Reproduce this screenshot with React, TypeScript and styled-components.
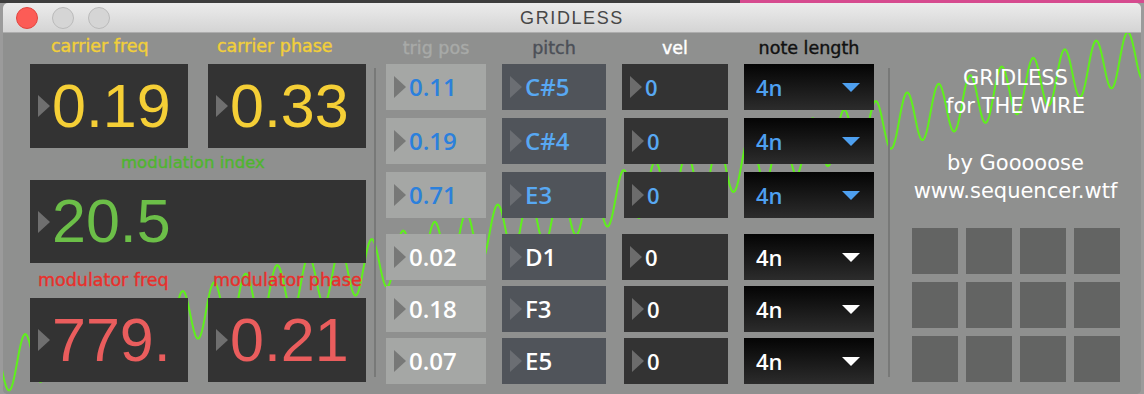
import React from 'react';
import styled, { createGlobalStyle } from 'styled-components';

const Global = createGlobalStyle`
  html, body { margin: 0; padding: 0; }
  body { width: 1144px; height: 394px; overflow: hidden; background: #9b9b9b; font-family: "DejaVu Sans", sans-serif; }
`;

const Page = styled.div`
  width: 1144px;
  height: 394px;
  box-sizing: border-box;
  padding-top: 3px;
  overflow: hidden;
  background: linear-gradient(to right, #3e3e3e 0, #3e3e3e 740px, #d64b8f 740px) top left / 100% 3px no-repeat, #9b9b9b;
`;

const Window = styled.div`
  margin-left: 3px;
  width: 1138px;
  height: 391px;
  border-radius: 5px;
  overflow: hidden;
  display: flex;
  flex-direction: column;
  background: #8f908f;
`;

const TitleBar = styled.div`
  flex: none;
  height: 29px;
  display: grid;
  grid-template-columns: 1fr auto 1fr;
  align-items: center;
  background: linear-gradient(#ececec, #d4d4d4);
  border-bottom: 1px solid #adadad;
  position: relative;
  z-index: 2;
`;

const Lights = styled.div`
  display: flex;
  gap: 14px;
  padding-left: 13px;
  margin-top: 1px;
`;

const Light = styled.span<{ $red?: boolean }>`
  width: 20px;
  height: 20px;
  border-radius: 50%;
  background: ${p => (p.$red ? '#fc5c56' : '#d5d5d5')};
  border: 1px solid ${p => (p.$red ? '#e1453f' : '#bababa')};
`;

const Title = styled.div`
  font: 400 18px/1 "Liberation Sans", Arial, sans-serif;
  letter-spacing: 1.6px;
  color: #474747;
`;

const Body = styled.div`
  position: relative;
  flex: 1;
  display: flex;
  padding-left: 27px;
  background: #8f908f;
`;

const Wave = styled.svg`
  position: absolute;
  left: 0;
  top: 0;
  z-index: 0;
  pointer-events: none;
`;

const LeftPanel = styled.div`
  position: relative;
  z-index: 1;
  flex: none;
  display: grid;
  grid-template-columns: 158px 158px;
  grid-template-rows: 31px 84px 32px 83px 35px 84px;
  column-gap: 20px;
`;

const Label = styled.div<{ $color: string; $indent: number; $size?: number; $span?: boolean }>`
  grid-column: ${p => (p.$span ? '1 / -1' : 'auto')};
  align-self: end;
  padding-bottom: 9px;
  padding-left: ${p => p.$indent}px;
  color: ${p => p.$color};
  font: 400 ${p => p.$size ?? 17.5}px/1 "DejaVu Sans", sans-serif;
  -webkit-text-stroke: 0.4px ${p => p.$color};
  white-space: nowrap;
`;

const Arrow = styled.span<{ $color?: string }>`
  flex: none;
  width: 0;
  height: 0;
  border-top: 11.5px solid transparent;
  border-bottom: 11.5px solid transparent;
  border-left: 12px solid ${p => p.$color ?? '#6f6f6f'};
`;

const BigBox = styled.div<{ $span?: boolean }>`
  grid-column: ${p => (p.$span ? '1 / -1' : 'auto')};
  display: flex;
  align-items: center;
  padding-left: 8px;
  background: #333333;
`;

const BigValue = styled.span<{ $color: string }>`
  margin-left: 2px;
  color: ${p => p.$color};
  font: 400 61px/1 "Liberation Sans", Arial, sans-serif;
`;

const Divider = styled.div<{ $gap: number }>`
  position: relative;
  z-index: 1;
  flex: none;
  width: 2px;
  height: 309px;
  margin-top: 35px;
  margin-left: ${p => p.$gap}px;
  background: #787978;
`;

const SeqPanel = styled.div`
  position: relative;
  z-index: 1;
  flex: none;
  margin-left: 10px;
  display: flex;
  flex-direction: column;
`;

const SeqGrid = styled.div<{ $gap: number; $top?: number }>`
  display: grid;
  grid-template-columns: 100px 104px 106px 130px;
  grid-auto-rows: 46px;
  column-gap: 16px;
  row-gap: ${p => p.$gap}px;
  margin-top: ${p => p.$top ?? 0}px;
`;

const HeaderRow = styled.div`
  display: grid;
  grid-template-columns: 100px 104px 106px 130px;
  column-gap: 16px;
  height: 31px;
`;

const Header = styled.div<{ $color: string }>`
  align-self: end;
  padding-bottom: 7px;
  text-align: center;
  color: ${p => p.$color};
  font: 400 17.5px/1 "DejaVu Sans", sans-serif;
  -webkit-text-stroke: 0.4px ${p => p.$color};
  white-space: nowrap;
`;

const NumBox = styled.div<{ $bg: string; $inset?: boolean }>`
  display: flex;
  align-items: center;
  padding-left: 8px;
  margin-left: ${p => (p.$inset ? 2 : 0)}px;
  background: ${p => p.$bg};
`;

const NumValue = styled.span<{ $color: string; $size?: number }>`
  margin-left: 3px;
  color: ${p => p.$color};
  font: 600 ${p => p.$size ?? 24}px/1 "Open Sans", sans-serif;
`;

const Menu = styled.div`
  display: flex;
  align-items: center;
  justify-content: space-between;
  padding: 0 14px 0 12px;
  background: linear-gradient(#040404, #2c2c2c);
`;

const MenuValue = styled.span<{ $color: string }>`
  color: ${p => p.$color};
  font: 600 22px/1 "Open Sans", sans-serif;
`;

const MenuCaret = styled.span<{ $color: string }>`
  width: 0;
  height: 0;
  border-left: 9px solid transparent;
  border-right: 9px solid transparent;
  border-top: 9px solid ${p => p.$color};
`;

const InfoPanel = styled.div`
  position: relative;
  z-index: 1;
  flex: 1;
  display: flex;
  flex-direction: column;
  align-items: center;
  padding-top: 31px;
`;

const InfoText = styled.div<{ $top?: number }>`
  margin-top: ${p => p.$top ?? 0}px;
  text-align: center;
  color: #ffffff;
  font: 400 21px/28px "DejaVu Sans", sans-serif;
  white-space: nowrap;
`;

const Pads = styled.div`
  margin-top: 23px;
  display: grid;
  grid-template-columns: repeat(4, 46px);
  grid-auto-rows: 46px;
  gap: 8px;
`;

const Pad = styled.div`
  background: #636463;
`;

const BLUE_DARK = '#2b80dc';
const BLUE = '#58a8f2';
const WHITE = '#ffffff';

type Row = { pos: string; pitch: string; inset: boolean };

const group1: Row[] = [
  { pos: '0.11', pitch: 'C#5', inset: false },
  { pos: '0.19', pitch: 'C#4', inset: true },
  { pos: '0.71', pitch: 'E3', inset: true },
];
const group2: Row[] = [
  { pos: '0.02', pitch: 'D1', inset: false },
  { pos: '0.18', pitch: 'F3', inset: true },
  { pos: '0.07', pitch: 'E5', inset: true },
];

const wavePath = (() => {
  let d = '';
  for (let x = 0; x <= 1144; x += 1) {
    const y = 367 - 0.274 * x - 26 * Math.cos((2 * Math.PI * (x - 25)) / 31.5);
    d += (x === 0 ? 'M' : 'L') + x + ' ' + y.toFixed(2) + ' ';
  }
  return d;
})();

function SeqRows({ rows, active, gap, top }: { rows: Row[]; active: boolean; gap: number; top?: number }) {
  const posColor = active ? BLUE_DARK : WHITE;
  const color = active ? BLUE : WHITE;
  return (
    <SeqGrid $gap={gap} $top={top}>
      {rows.map(r => (
        <React.Fragment key={r.pos}>
          <NumBox $bg="#a5a7a5">
            <Arrow $color="#777877" />
            <NumValue $color={posColor}>{r.pos}</NumValue>
          </NumBox>
          <NumBox $bg="#50545a">
            <Arrow $color="#6b6e73" />
            <NumValue $color={color}>{r.pitch}</NumValue>
          </NumBox>
          <NumBox $bg="#333333" $inset={r.inset}>
            <Arrow $color="#6c6c6c" />
            <NumValue $color={color} $size={22}>0</NumValue>
          </NumBox>
          <Menu>
            <MenuValue $color={active ? '#4ea0f0' : WHITE}>4n</MenuValue>
            <MenuCaret $color={active ? '#4ea0f0' : WHITE} />
          </Menu>
        </React.Fragment>
      ))}
    </SeqGrid>
  );
}

export default function App() {
  return (
    <Page>
      <Global />
      <Window>
        <TitleBar>
          <Lights>
            <Light $red />
            <Light />
            <Light />
          </Lights>
          <Title>GRIDLESS</Title>
          <span />
        </TitleBar>
        <Body>
          <Wave width={1138} height={361} viewBox="3 33 1138 361">
            <path d={wavePath} fill="none" stroke="#5ff01c" strokeWidth={2} />
          </Wave>
          <LeftPanel>
            <Label $color="#f2cf3a" $indent={21}>carrier freq</Label>
            <Label $color="#f2cf3a" $indent={9}>carrier phase</Label>
            <BigBox>
              <Arrow />
              <BigValue $color="#f5cf36">0.19</BigValue>
            </BigBox>
            <BigBox>
              <Arrow />
              <BigValue $color="#f5cf36">0.33</BigValue>
            </BigBox>
            <Label $color="#4fb52f" $indent={91} $size={16.5} $span>modulation index</Label>
            <BigBox $span>
              <Arrow />
              <BigValue $color="#6cbf48">20.5</BigValue>
            </BigBox>
            <Label $color="#e8302c" $indent={8}>modulator freq</Label>
            <Label $color="#e8302c" $indent={5}>modulator phase</Label>
            <BigBox>
              <Arrow />
              <BigValue $color="#ea5d5d">779.</BigValue>
            </BigBox>
            <BigBox>
              <Arrow />
              <BigValue $color="#ea5d5d">0.21</BigValue>
            </BigBox>
          </LeftPanel>
          <Divider $gap={8} />
          <SeqPanel>
            <HeaderRow>
              <Header $color="#a8aaa8">trig pos</Header>
              <Header $color="#4b4f57">pitch</Header>
              <Header $color="#ffffff">vel</Header>
              <Header $color="#111111">note length</Header>
            </HeaderRow>
            <SeqRows rows={group1} active gap={8} />
            <SeqRows rows={group2} active={false} gap={6} top={16} />
          </SeqPanel>
          <Divider $gap={14} />
          <InfoPanel>
            <InfoText>
              GRIDLESS
              <br />
              for THE WIRE
            </InfoText>
            <InfoText $top={29}>
              by Gooooose
              <br />
              www.sequencer.wtf
            </InfoText>
            <Pads>
              {Array.from({ length: 12 }, (_, i) => (
                <Pad key={i} />
              ))}
            </Pads>
          </InfoPanel>
        </Body>
      </Window>
    </Page>
  );
}
